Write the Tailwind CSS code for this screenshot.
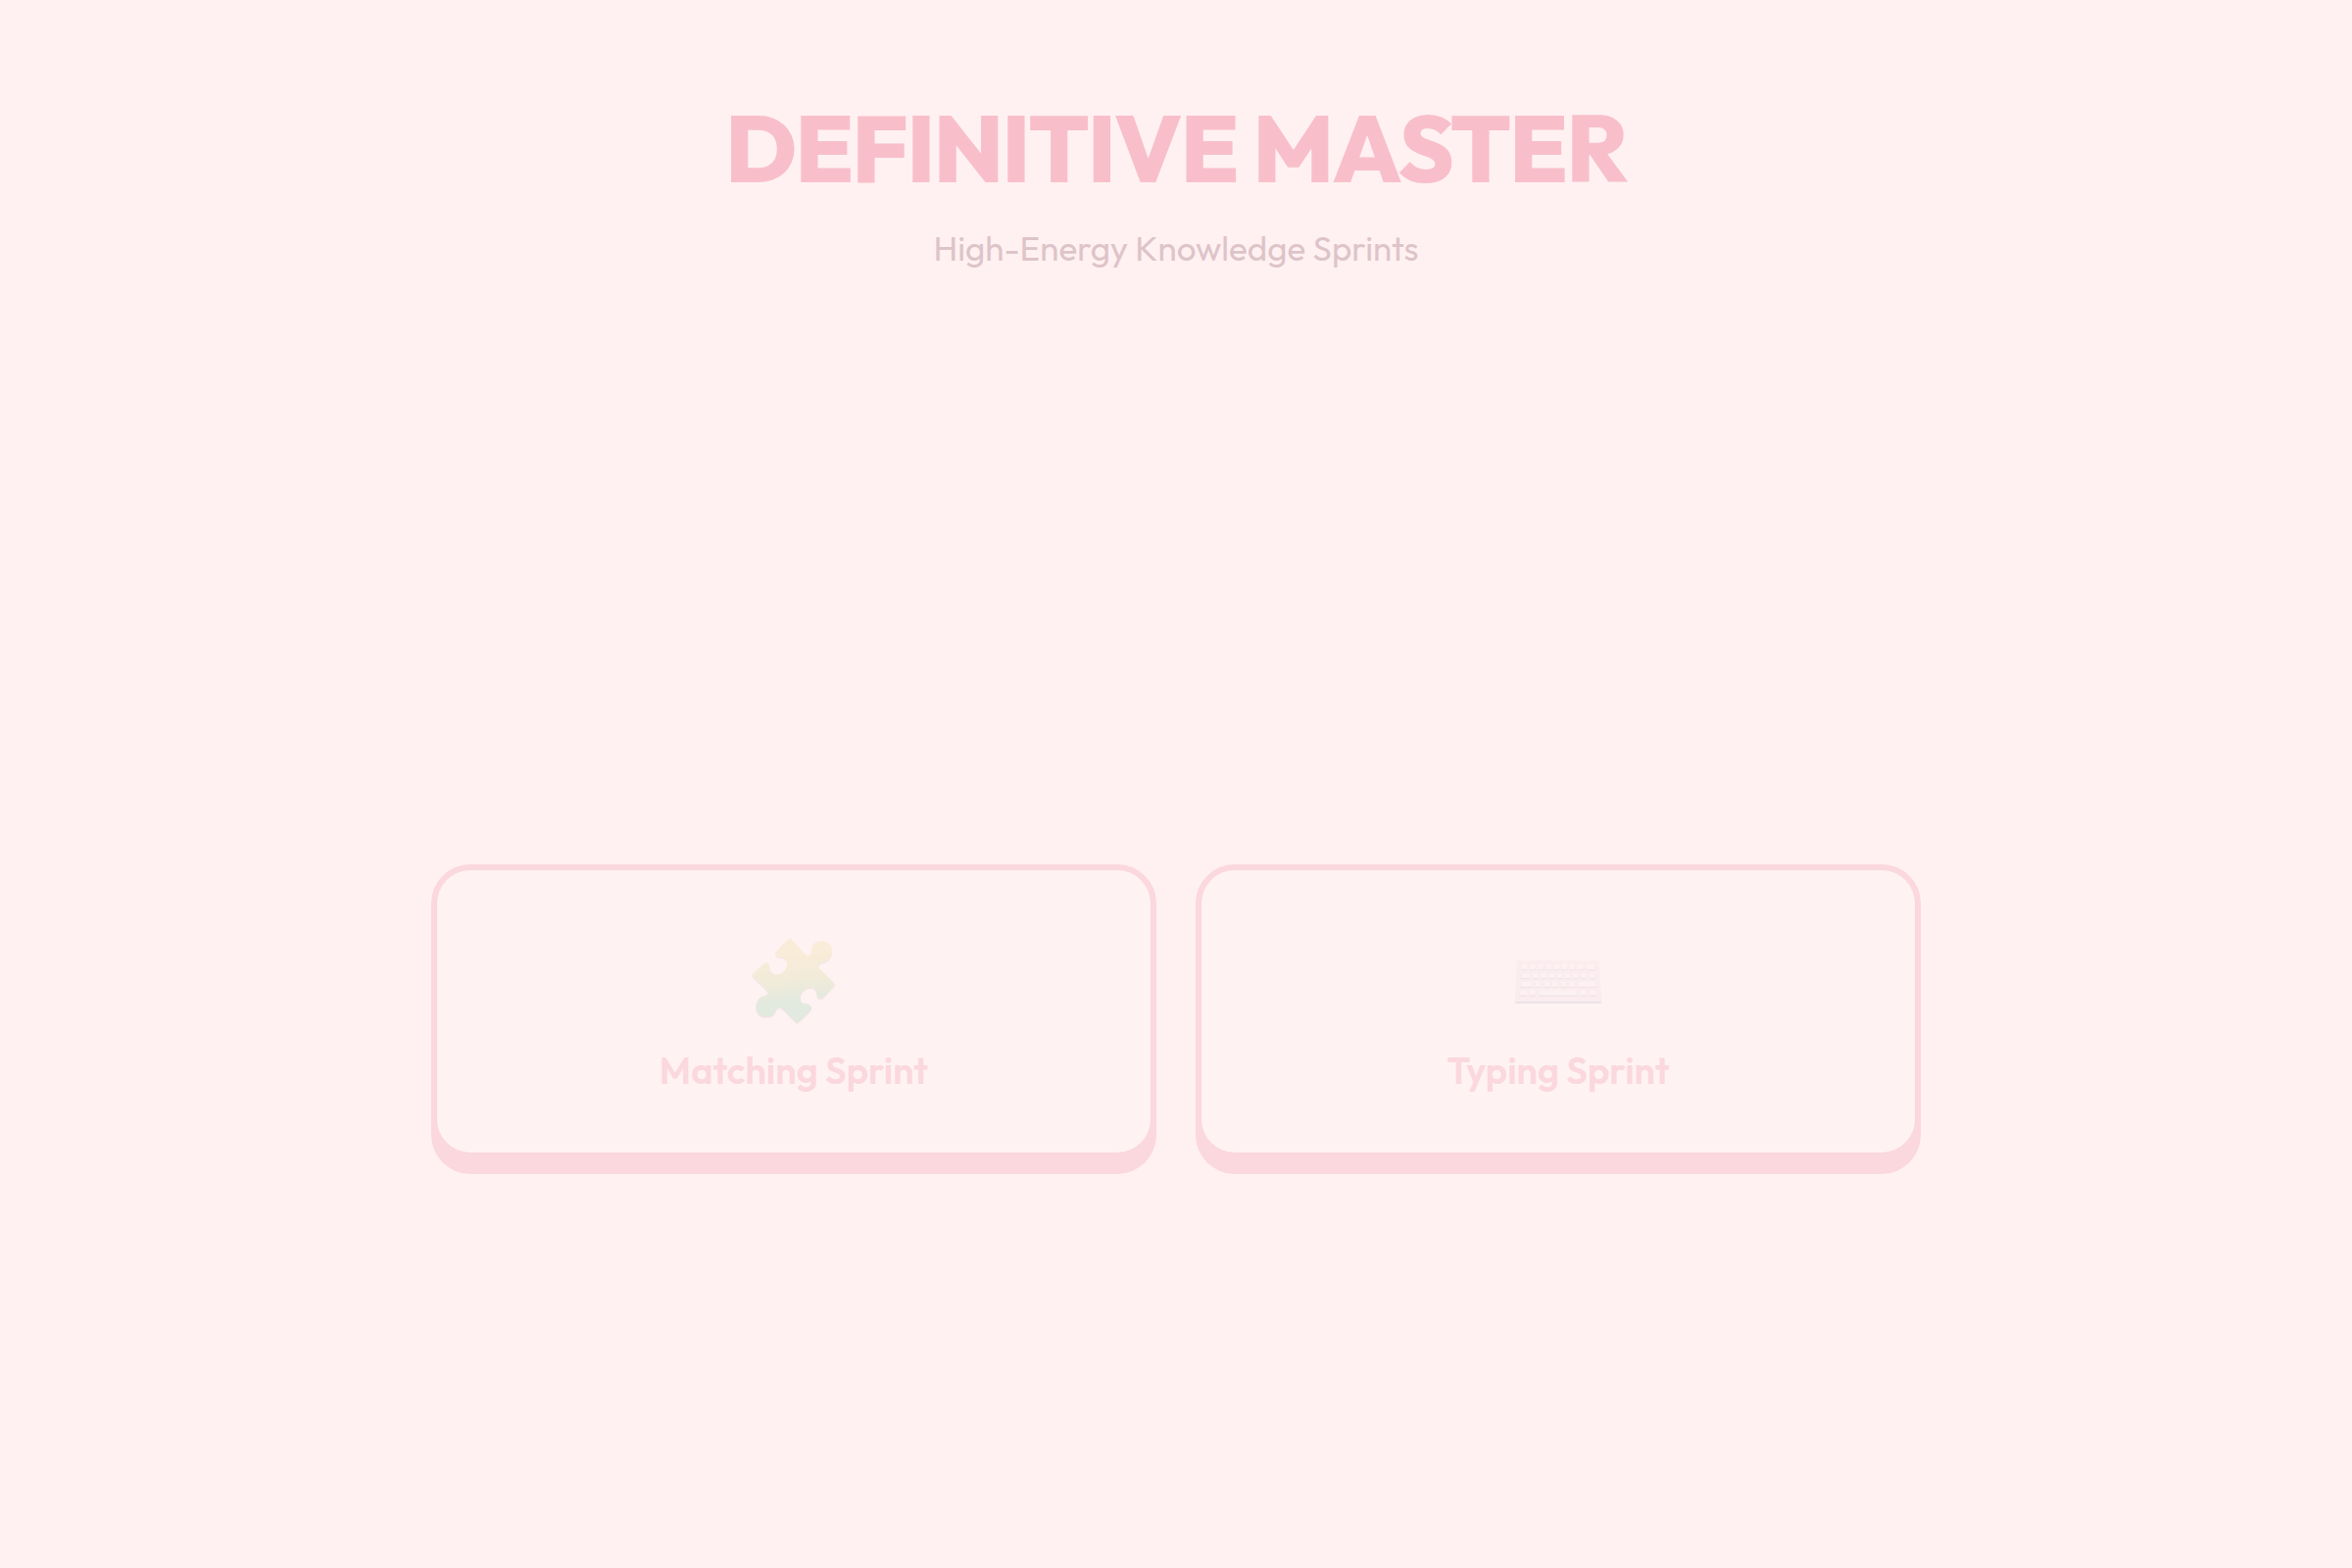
<!DOCTYPE html>
<html lang="en">
<head>
<meta charset="utf-8">
<meta name="viewport" content="width=device-width, initial-scale=1">
<title>Definitive Master</title>
<script src="https://cdn.jsdelivr.net/npm/@tailwindcss/browser@4"></script>
</head>
<body class="min-h-screen bg-[#fff1f1] font-[Outfit,Lato,sans-serif] flex flex-col items-center px-10">
  <header class="pt-24 text-center">
    <h1 class="text-[96px] leading-[110px] font-extrabold tracking-[-2px] text-[#f8bfca]">DEFINITIVE MASTER</h1>
    <p class="mt-6 text-[35px] leading-[46px] text-[#ddc4c9]">High-Energy Knowledge Sprints</p>
  </header>
  <main class="flex-1 w-full max-w-[1520px] flex items-center pt-[188px]">
    <div class="w-full grid grid-cols-2 gap-10">
      <button type="button" class="h-[300px] rounded-[40px] border-6 border-[#fbd7de] bg-[#fff2f2] shadow-[0_16px_0_#fbd7de] pb-2 flex flex-col items-center justify-center gap-2 text-[38px] leading-[46px] font-semibold text-[#fbd7de]">
        <svg class="size-[120px]" viewBox="0 0 360 360" aria-hidden="true">
          <defs>
            <linearGradient id="piece" x1="0.45" y1="0" x2="0.55" y2="1">
              <stop offset="0.2" stop-color="#f9ecd8"/>
              <stop offset="0.5" stop-color="#f1ebd9"/>
              <stop offset="0.75" stop-color="#e2e9df"/>
            </linearGradient>
            <path id="jigsaw" d="M165 50Q168 49 171 52L215 98Q224 107 231 100Q235 96 234 86C234 70 246 58 265 58C284 58 297 70 297 88C297 108 286 120 270 123Q257 126 256 134Q257 140 263 146L304 187Q307 191 304 195L272 229Q263 237 254 231Q250 228 250 219C249 207 242 199 230 200C213 202 200 217 200 233Q200 247 213 249Q226 248 233 258Q237 265 231 271L195 306Q190 309 185 305L146 266Q137 257 130 264Q127 267 124 274C118 286 108 290 94 290C76 290 64 278 64 260C64 242 74 230 88 226Q102 223 101 215Q100 211 94 205L54 166Q51 162 55 158L86 128Q96 119 103 128Q105 132 106 140C108 153 118 161 130 160C147 158 159 144 160 128C160 114 152 108 140 107Q127 106 124 98Q123 93 127 89Z"/>
          </defs>
          <use href="#jigsaw" y="4" fill="#f6e6e7"/>
          <use href="#jigsaw" fill="url(#piece)"/>
        </svg>
        <span>Matching Sprint</span>
      </button>
      <button type="button" class="h-[300px] rounded-[40px] border-6 border-[#fbd7de] bg-[#fff2f2] shadow-[0_16px_0_#fbd7de] pb-2 flex flex-col items-center justify-center gap-2 text-[38px] leading-[46px] font-semibold text-[#fbd7de]">
        <svg class="size-[120px]" viewBox="0 -60 360 360" aria-hidden="true">
          <path d="M48 180H312V186Q312 189 308 189H52Q48 189 48 186Z" fill="#ebe4e7"/>
          <path d="M58 57H302Q305 57 305 60L312 182H48L54 60Q54 57 58 57Z" fill="#fbecef"/>
          <g fill="#f0e5e9">
            <path d="M67 72H84V88H66ZM93 72H110V88H92ZM118 72H134V88H117ZM143 72H159V88H142ZM167 72H183V88H166ZM192 72H208V88H191ZM216 72H233V88H216ZM240 72H257V88H240ZM267 72H292L293 88H267Z"/>
            <path d="M67 99H94V115H65ZM102 99H119V115H101ZM127 99H144V115H126ZM151 99H168V115H151ZM176 99H193V115H175ZM200 99H218V115H200ZM225 99H242V115H225ZM250 99H267V115H250ZM275 99H293L294 115H275Z"/>
            <path d="M65 125H101V141H63ZM110 125H128V141H109ZM136 125H154V141H135ZM162 125H180V141H161ZM188 125H206V141H188ZM214 125H232V141H214ZM241 125H295L297 141H241Z"/>
            <path d="M63 150H84V167H61ZM93 150H112V167H92ZM121 150H239V167H120ZM247 150H267V167H247ZM275 150H297L298 167H275Z"/>
          </g>
          <g fill="#fef1f2">
            <path d="M68 69H84V84H67ZM94 69H110V84H93ZM118 69H134V84H118ZM143 69H159V84H143ZM167 69H183V84H167ZM192 69H208V84H192ZM216 69H232V84H216ZM240 69H257V84H240ZM267 69H291L292 84H267Z"/>
            <path d="M68 96H93V111H67ZM102 96H118V111H102ZM127 96H143V111H127ZM151 96H168V111H151ZM176 96H192V111H176ZM200 96H217V111H200ZM225 96H241V111H225ZM250 96H266V111H250ZM275 96H292L293 111H275Z"/>
            <path d="M66 122H101V137H65ZM110 122H127V137H110ZM136 122H153V137H136ZM162 122H179V137H162ZM188 122H205V137H188ZM214 122H231V137H214ZM241 122H294L295 137H241Z"/>
            <path d="M64 148H84V163H62ZM93 148H111V163H93ZM121 148H238V163H121ZM247 148H266V163H247ZM275 148H296L297 163H275Z"/>
          </g>
        </svg>
        <span>Typing Sprint</span>
      </button>
    </div>
  </main>
</body>
</html>
